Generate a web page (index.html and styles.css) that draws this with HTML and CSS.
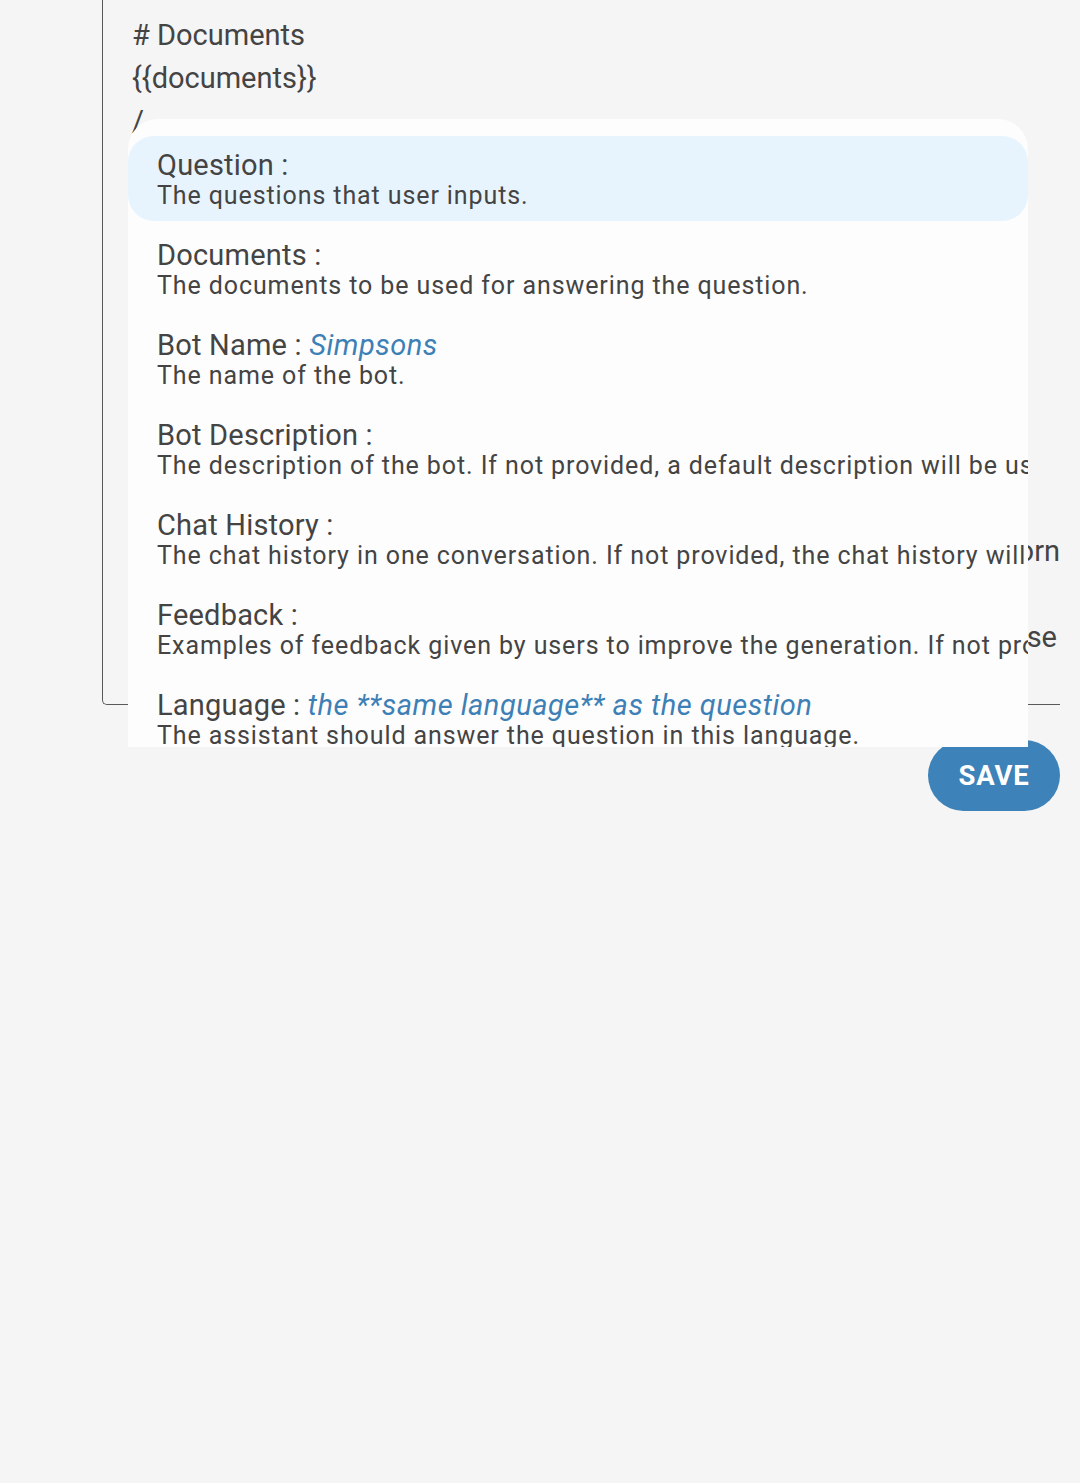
FILE: index.html
```html
<!DOCTYPE html>
<html>
<head>
<meta charset="utf-8">
<link rel="stylesheet" href="styles.css">
</head>
<body>
<div class="page">
  <div class="field">
    <div class="editor">
      <div class="line"># Documents</div>
      <div class="line">{{documents}}</div>
      <div class="line">/</div>
      <div class="line"></div>
      <div class="line"></div>
      <div class="line"></div>
      <div class="line"></div>
      <div class="line"></div>
      <div class="line"></div>
      <div class="line"></div>
      <div class="line"></div>
      <div class="line"></div>
      <div class="line right">language and the user has sworn</div>
      <div class="line"></div>
      <div class="line right pad">in the same response we use</div>
    </div>
  </div>

  <div class="popup">
    <div class="item active">
      <div class="title">Question :</div>
      <div class="desc">The questions that user inputs.</div>
    </div>
    <div class="item">
      <div class="title">Documents :</div>
      <div class="desc">The documents to be used for answering the question.</div>
    </div>
    <div class="item">
      <div class="title">Bot Name : <em class="val">Simpsons</em></div>
      <div class="desc">The name of the bot.</div>
    </div>
    <div class="item">
      <div class="title">Bot Description :</div>
      <div class="desc">The description of the bot. If not provided, a default description will be used.</div>
    </div>
    <div class="item">
      <div class="title">Chat History :</div>
      <div class="desc">The chat history in one conversation. If not provided, the chat history will be empty.</div>
    </div>
    <div class="item">
      <div class="title">Feedback :</div>
      <div class="desc">Examples of feedback given by users to improve the generation. If not provided, no feedback is used.</div>
    </div>
    <div class="item">
      <div class="title">Language : <em class="val">the **same language** as the question</em></div>
      <div class="desc">The assistant should answer the question in this language.</div>
    </div>
  </div>

  <div class="actions">
    <button class="save">SAVE</button>
  </div>
</div>
</body>
</html>
```

FILE: styles.css
```css
html, body {
  margin: 0;
  padding: 0;
  background: #f5f5f5;
  font-family: Roboto, "Noto Sans", sans-serif;
  color: #444444;
}

.page {
  position: relative;
  width: 1080px;
  height: 1483px;
}

.field {
  margin-left: 102px;
  width: 958px;
  height: 705px;
  border-left: 1px solid #5a5a5a;
  border-bottom: 1px solid #5a5a5a;
  border-bottom-left-radius: 5px;
  overflow: hidden;
  box-sizing: border-box;
}

.editor {
  padding: 14px 0 0 29px;
}

.line {
  height: 43px;
  line-height: 43px;
  font-size: 29px;
  white-space: nowrap;
  color: #444444;
}

.line.right {
  text-align: right;
}

.line.pad {
  padding-right: 3px;
}

.popup {
  position: absolute;
  left: 128px;
  top: 119px;
  width: 900px;
  height: 628px;
  background: #fdfdfd;
  border-radius: 30px 30px 0 0;
  overflow: hidden;
  padding-top: 17px;
  box-sizing: border-box;
  display: flex;
  flex-direction: column;
  gap: 5px;
  z-index: 2;
}

.item {
  padding: 14px 29px 10px;
  border-radius: 26px;
  white-space: nowrap;
}

.item.active {
  background: #e8f4fd;
}

.title {
  font-size: 29px;
  line-height: 30px;
  letter-spacing: 0.2px;
  color: #444444;
}

.val {
  color: #3d80b6;
  font-style: italic;
  letter-spacing: 0.5px;
}

.desc {
  font-size: 25px;
  line-height: 31px;
  letter-spacing: 0.9px;
  color: #444444;
}

.actions {
  display: flex;
  justify-content: flex-end;
  padding-right: 20px;
  margin-top: 35px;
}

.save {
  width: 132px;
  height: 71px;
  border: none;
  border-radius: 36px;
  background: #3d82b8;
  color: #ffffff;
  font-family: Roboto, "Noto Sans", sans-serif;
  font-weight: 700;
  font-size: 27.5px;
  letter-spacing: 0.8px;
  padding: 0;
}
```
